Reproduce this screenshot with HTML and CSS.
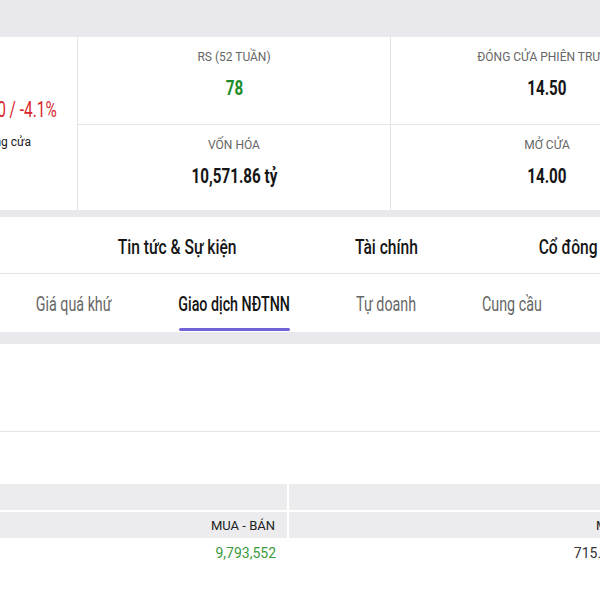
FILE: index.html
```html
<!DOCTYPE html>
<html lang="vi">
<head>
    <meta charset="UTF-8">
    <meta name="viewport" content="width=device-width, initial-scale=1.0">
    <title>HAG - Giao dịch NĐTNN</title>
    <link rel="stylesheet" href="styles.css">
</head>
<body>
    <div class="page">
        <div class="top-band"></div>

        <div class="stats">
            <div class="stat-main">
                <div class="change"><span class="narrow">-0.60 / -4.1%</span></div>
                <div class="note">Giá đóng cửa</div>
            </div>
            <div class="stat">
                <div class="stat-label">RS (52 tuần)</div>
                <div class="stat-value up"><span class="narrow">78</span></div>
            </div>
            <div class="stat">
                <div class="stat-label">Đóng cửa phiên trước</div>
                <div class="stat-value"><span class="narrow">14.50</span></div>
            </div>
            <div class="stat">
                <div class="stat-label">Vốn hóa</div>
                <div class="stat-value"><span class="narrow">10,571.86 tỷ</span></div>
            </div>
            <div class="stat">
                <div class="stat-label">Mở cửa</div>
                <div class="stat-value"><span class="narrow">14.00</span></div>
            </div>
        </div>

        <div class="tabs-card">
            <div class="tabs">
                <div class="tab w-74"><span class="narrow">Tổng quan</span></div>
                <div class="tab w-115"><span class="narrow">Tin tức &amp; Sự kiện</span></div>
                <div class="tab w-60"><span class="narrow">Tài chính</span></div>
                <div class="tab w-172"><span class="narrow">Cổ đông &amp; Ban lãnh đạo</span></div>
            </div>
            <div class="subtabs">
                <div class="subtab w-78"><span class="narrow">Giá quá khứ</span></div>
                <div class="subtab w-111 active"><span class="narrow">Giao dịch NĐTNN</span></div>
                <div class="subtab w-60"><span class="narrow">Tự doanh</span></div>
                <div class="subtab w-60"><span class="narrow">Cung cầu</span></div>
            </div>
        </div>

        <div class="table-card">
            <div class="toolbar"></div>
            <table class="data">
                <colgroup>
                    <col class="col-a">
                    <col class="col-b">
                    <col>
                </colgroup>
                <thead>
                    <tr class="group-row">
                        <th></th>
                        <th></th>
                        <th></th>
                    </tr>
                    <tr>
                        <th>Mua - Bán</th>
                        <th>Mua - Bán</th>
                        <th></th>
                    </tr>
                </thead>
                <tbody>
                    <tr>
                        <td class="pos">9,793,552</td>
                        <td class="val">715.604.800</td>
                        <td></td>
                    </tr>
                </tbody>
            </table>
        </div>
    </div>
</body>
</html>
```

FILE: styles.css
```css
:root {
    --bg: #e9e9ed;
    --line: #e4e4e8;
    --text: #151515;
    --muted: #666;
    --green: #1e8c2a;
    --red: #d8262d;
    --accent: #7262d8;
}

body {
    margin: 0;
    background-color: var(--bg);
    font-family: Roboto, "Liberation Sans", sans-serif;
    color: var(--text);
    overflow: hidden;
}

.page {
    margin-left: -235px;
    width: 1180px;
}

.top-band {
    height: 37px;
}

/* condensed look: the site uses a narrow display face */
.narrow {
    display: inline-block;
    white-space: nowrap;
    transform: scaleX(0.76);
}

/* stats block */
.stats {
    display: grid;
    grid-template-columns: 313px 313px 313px;
    grid-template-rows: 87px 86px;
    background: #fff;
}

.stat-main {
    grid-row: 1 / 3;
    border-right: 1px solid var(--line);
    display: flex;
    flex-direction: column;
    align-items: flex-end;
    padding-right: 20px;
    padding-top: 58px;
}

.change {
    font-size: 22px;
    color: var(--red);
    line-height: 30px;
}

.change .narrow {
    transform: scaleX(0.7);
    transform-origin: right center;
}

.note {
    font-size: 12px;
    margin-top: 10px;
    margin-right: 26px;
    color: #222;
}

.stat {
    border-right: 1px solid var(--line);
    text-align: center;
    padding-top: 12px;
}

.stat:nth-of-type(n+4) {
    border-top: 1px solid var(--line);
}

.stat-label {
    text-transform: uppercase;
    font-size: 12px;
    color: var(--muted);
    line-height: 16px;
    white-space: nowrap;
}

.stat-value {
    font-weight: bold;
    font-size: 20px;
    line-height: 28px;
    margin-top: 9px;
}

.up {
    color: var(--green);
}

/* tabs */
.tabs-card {
    background: #fff;
    margin-top: 7px;
}

.tabs {
    display: flex;
    gap: 121px;
    padding-left: 160px;
    padding-top: 4px;
    height: 57px;
    box-sizing: border-box;
    align-items: center;
    border-bottom: 1px solid var(--line);
}

.tab {
    display: flex;
    justify-content: center;
    flex-shrink: 0;
    font-size: 20px;
    font-weight: 500;
}

.tab .narrow {
    transform: scaleX(0.78);
}

.subtabs {
    display: flex;
    gap: 66px;
    padding-left: 270px;
    height: 58px;
}

.subtab {
    display: flex;
    justify-content: center;
    flex-shrink: 0;
    font-size: 21px;
    color: var(--muted);
    line-height: 56px;
    padding-top: 2px;
    position: relative;
}

.subtab .narrow {
    transform: scaleX(0.68);
}

.w-60 { width: 60px; }
.w-74 { width: 74px; }
.w-78 { width: 78px; }
.w-111 { width: 111px; }
.w-115 { width: 115px; }
.w-172 { width: 172px; }

.subtab.active {
    color: var(--text);
    font-weight: 500;
}

.subtab.active::after {
    content: "";
    position: absolute;
    left: 0;
    right: 0;
    bottom: 1px;
    height: 3px;
    border-radius: 2px;
    background: var(--accent);
}

/* table */
.table-card {
    background: #fff;
    margin-top: 12px;
    height: 300px;
}

.toolbar {
    height: 87px;
    border-bottom: 1px solid var(--line);
}

.data {
    margin-top: 52px;
    border-collapse: collapse;
    table-layout: fixed;
    width: 1180px;
}

.col-a { width: 523px; }
.col-b { width: 385px; }

.data th {
    background: #ececef;
    font-weight: normal;
    font-size: 13px;
    text-align: right;
    text-transform: uppercase;
    color: #222;
    height: 26px;
    padding: 0 12px;
    border-right: 2px solid #fff;
}

.data .group-row th {
    border-bottom: 2px solid #fff;
    height: 26px;
}

.data td {
    text-align: right;
    font-size: 14px;
    height: 29px;
    padding: 0 12px;
    color: #333;
}

.data td.pos {
    color: #3b9a3b;
}

.data td.val {
    padding-right: 21px;
}
```
